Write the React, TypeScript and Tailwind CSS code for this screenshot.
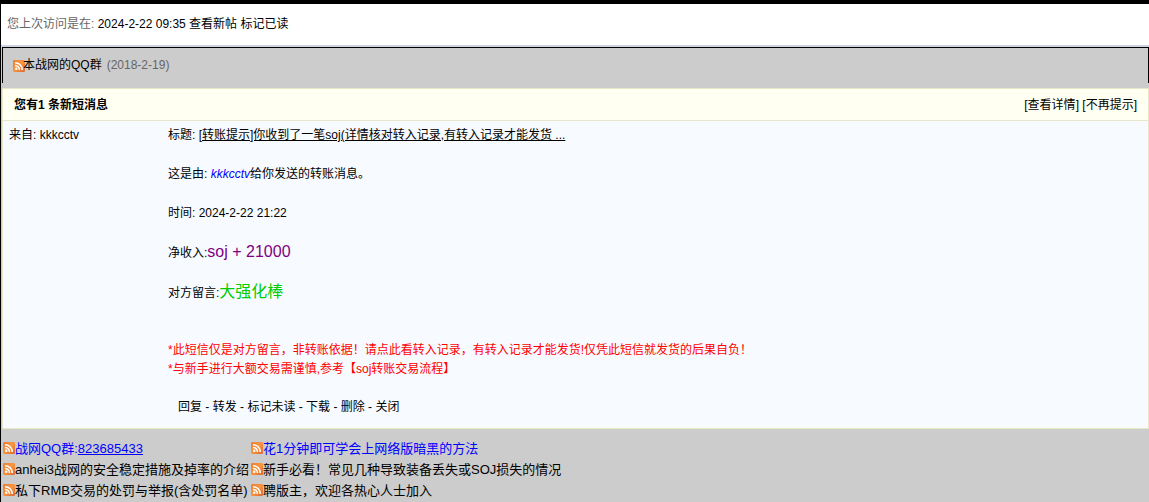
import type { ReactNode } from 'react';

type Notice = {
  text: string;
  number?: string;
  highlight?: boolean;
};

// Two columns, filled row by row.
const NOTICES: Notice[] = [
  { text: '战网QQ群:', number: '823685433', highlight: true },
  { text: '花1分钟即可学会上网络版暗黑的方法', highlight: true },
  { text: 'anhei3战网的安全稳定措施及掉率的介绍' },
  { text: '新手必看！常见几种导致装备丢失或SOJ损失的情况' },
  { text: '私下RMB交易的处罚与举报(含处罚名单)' },
  { text: '聘版主，欢迎各热心人士加入' },
];

const ACTIONS = ['回复', '转发', '标记未读', '下载', '删除', '关闭'];

export default function App() {
  return (
    <div className="min-h-screen border-l border-t-4 border-black bg-[#cccccc] font-['Liberation_Sans','Noto_Sans_CJK_SC',sans-serif] text-xs leading-[19px] text-black">
      <header className="bg-white px-1.5 py-[11px]">
        <span className="text-[#666666]">您上次访问是在:</span>{' '}
        2024-2-22 09:35 <Link>查看新帖</Link> <Link>标记已读</Link>
      </header>

      <div className="border-t-2 border-[#ced4e0] pl-px">
        <Announcement />
        <MessageBox />
      </div>

      <NoticeList />
    </div>
  );
}

function Announcement() {
  return (
    <div className="mb-[5px] flex h-9 items-center border-x border-t border-black pl-2.5">
      {/* the title tucks slightly over the icon */}
      <RssIcon />
      <Link className="-ml-0.5">本战网的QQ群</Link>
      <span className="ml-[5px] text-[#666666]">(2018-2-19)</span>
    </div>
  );
}

function MessageBox() {
  return (
    <section className="border border-[#e8e8c8] bg-[#f7fbff]">
      <div className="flex items-center justify-between border-b border-[#e8e8c8] bg-[#fffff2] pt-[7px] pr-[11px] pb-[5px] pl-[11px]">
        <h1 className="font-bold">您有1 条新短消息</h1>
        <p>
          [<Link>查看详情</Link>] [<Link>不再提示</Link>]
        </p>
      </div>

      <div className="flex px-1.5 pt-1 pb-[11px]">
        <p className="w-[159px] shrink-0 leading-5">
          来自: <Link>kkkcctv</Link>
        </p>
        <div className="min-w-0 flex-1">
          <div className="space-y-[19px] leading-5">
            <p>
              标题:{' '}
              <Link className="underline">
                [转账提示]你收到了一笔soj(详情核对转入记录,有转入记录才能发货 ...
              </Link>
            </p>
            <p>
              这是由: <i className="text-[#0000ff]">kkkcctv</i>给你发送的转账消息。
            </p>
            <p>时间: 2024-2-22 21:22</p>
            <p>
              净收入:<span className="text-base leading-5 text-[#800080]">soj + 21000</span>
            </p>
            <p>
              对方留言:<span className="text-base leading-5 text-[#00cc00]">大强化棒</span>
            </p>
          </div>
          <div className="mt-[38px] text-[#ff0000]">
            <p>*此短信仅是对方留言，非转账依据！请点此看转入记录，有转入记录才能发货!仅凭此短信就发货的后果自负！</p>
            <p>*与新手进行大额交易需谨慎,参考【soj转账交易流程】</p>
          </div>
          <p className="mt-[19px] pl-2.5">
            {ACTIONS.map((action, i) => (
              <span key={action}>
                {i > 0 && ' - '}
                <Link>{action}</Link>
              </span>
            ))}
          </p>
        </div>
      </div>
    </section>
  );
}

function NoticeList() {
  return (
    <ul className="grid grid-cols-[max-content_1fr] gap-x-0.5 pt-[9px] pl-0.5 text-[13px] leading-[21px]">
      {NOTICES.map((notice) => (
        <li key={notice.text} className="flex items-start">
          <RssIcon className="mt-1" />
          <Link className={notice.highlight ? 'text-[#0000ff]' : ''}>
            {notice.text}
            {notice.number && <span className="underline">{notice.number}</span>}
          </Link>
        </li>
      ))}
    </ul>
  );
}

function Link({ className = '', children }: { className?: string; children: ReactNode }) {
  return (
    <a href="#" className={className}>
      {children}
    </a>
  );
}

function RssIcon({ className = '' }: { className?: string }) {
  return (
    <svg viewBox="0 0 12 12" className={`size-3 shrink-0 ${className}`} aria-hidden="true">
      <defs>
        <linearGradient id="rss" x1="0" y1="0" x2="1" y2="1">
          <stop offset="0" stopColor="#ea7d38" />
          <stop offset="0.5" stopColor="#f9963f" />
          <stop offset="1" stopColor="#dd6630" />
        </linearGradient>
      </defs>
      <rect width="12" height="12" rx="1.2" fill="url(#rss)" />
      <circle cx="3.3" cy="8.8" r="1.2" fill="#fff" />
      <path
        d="M2 5.5a4.4 4.4 0 0 1 4.5 4.5M2 2.7a7.3 7.3 0 0 1 7.3 7.3"
        fill="none"
        stroke="#fff"
        strokeWidth="1.5"
      />
    </svg>
  );
}
